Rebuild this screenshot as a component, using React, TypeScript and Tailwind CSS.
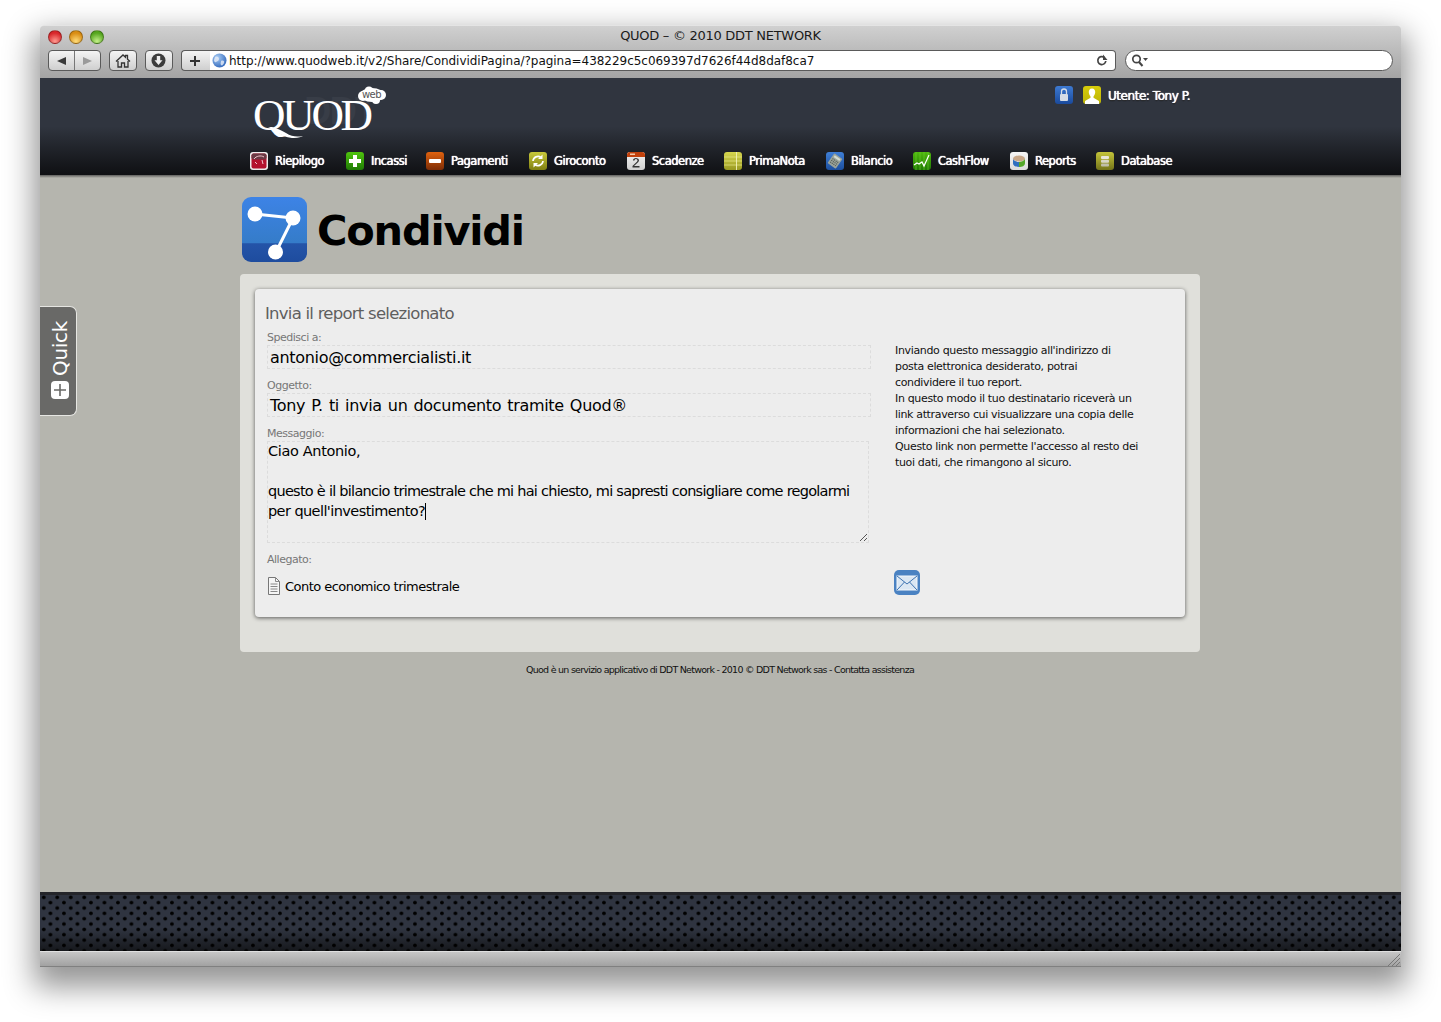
import React from "react";

const lg = "[font-family:'DejaVu_Sans',sans-serif]";

function Box({ id, from, to, children, rx = 3 }: { id: string; from: string; to: string; children?: React.ReactNode; rx?: number }) {
  return (
    <svg width="18" height="18" viewBox="0 0 18 18" className="shrink-0">
      <defs>
        <linearGradient id={id} x1="0" y1="0" x2="0" y2="1">
          <stop offset="0" stopColor={from} />
          <stop offset="1" stopColor={to} />
        </linearGradient>
      </defs>
      <rect width="18" height="18" rx={rx} fill={`url(#${id})`} />
      {children}
    </svg>
  );
}

const navItems: { label: string; w: string; icon: React.ReactNode }[] = [
  {
    label: "Riepilogo",
    w: "w-[51px]",
    icon: (
      <Box id="n1" from="#f2f2f2" to="#e8e8e8">
        <rect x="1.5" y="1.5" width="15" height="15" rx="2" fill="#b3122e" />
        <rect x="1.5" y="1.5" width="15" height="6" rx="2" fill="#6b3a45" />
        <path d="M4 7c2-3 7-4 10-2M5 10l2 2M12 8l1 4" stroke="#f0c8d0" strokeWidth="1" fill="none" />
      </Box>
    ),
  },
  {
    label: "Incassi",
    w: "w-[35px]",
    icon: (
      <Box id="n2" from="#4fc40e" to="#1f7a05">
        <path d="M7 3h4v4h4v4h-4v4H7v-4H3V7h4z" fill="#fff" />
      </Box>
    ),
  },
  {
    label: "Pagamenti",
    w: "w-[58px]",
    icon: (
      <Box id="n3" from="#e0620f" to="#7c2c06">
        <rect x="3" y="7" width="12" height="4" rx="1" fill="#fff" />
      </Box>
    ),
  },
  {
    label: "Giroconto",
    w: "w-[53px]",
    icon: (
      <Box id="n4" from="#c9c93a" to="#7f7f12">
        <path d="M4 9a5 5 0 0 1 8-3.5M14 9a5 5 0 0 1-8 3.5" stroke="#fff" strokeWidth="1.7" fill="none" />
        <path d="M13.5 2.5v4.5H9zM4.500 15.500V11H9z" fill="#fff" />
      </Box>
    ),
  },
  {
    label: "Scadenze",
    w: "w-[52px]",
    icon: (
      <Box id="n5" from="#f4f4f4" to="#cfcfcf">
        <path d="M0 5V3a3 3 0 0 1 3-3h12a3 3 0 0 1 3 3v2z" fill="#c2410c" />
        <rect x="3" y="1.500" width="5" height="1.500" fill="#f3c9a8" />
        <path d="M6 8.500a3 2.300 0 1 1 5.300 1.400L7 14h5.500v1.500H5.500V14l4.400-4.300A1.500 1.500 0 1 0 7.500 8.500z" fill="#333" />
      </Box>
    ),
  },
  {
    label: "PrimaNota",
    w: "w-[57px]",
    icon: (
      <Box id="n6" from="#d6d64e" to="#9a9a22">
        <path d="M0 5h18M0 9h18M0 13h18" stroke="#e8e88a" strokeWidth=".7" />
        <path d="M12.500 0v18" stroke="#f2f2b8" strokeWidth=".9" />
      </Box>
    ),
  },
  {
    label: "Bilancio",
    w: "w-[42px]",
    icon: (
      <Box id="n7" from="#3f7fd6" to="#1c4f9e">
        <g transform="rotate(35 9 9)">
          <rect x="4" y="3" width="10" height="12" rx="1" fill="#9aa39a" />
          <rect x="5.500" y="4.300" width="7" height="2.200" fill="#d3dbd0" />
          <path d="M5.500 8.500h7M5.500 10.500h7M5.500 12.500h7" stroke="#50584f" strokeWidth="1" strokeDasharray="1.200 .8" />
        </g>
      </Box>
    ),
  },
  {
    label: "CashFlow",
    w: "w-[52px]",
    icon: (
      <Box id="n8" from="#4fb80e" to="#1f7a05">
        <path d="M3 0v18M7 0v18M11 0v18M15 0v18" stroke="#6ccf2c" strokeWidth="1" opacity=".6" />
        <path d="M1 13l3-2 2 1 3-2 2 4 5-11" stroke="#fff" strokeWidth="1.200" fill="none" />
      </Box>
    ),
  },
  {
    label: "Reports",
    w: "w-[41px]",
    icon: (
      <Box id="n9" from="#f6f6f6" to="#dcdcdc">
        <ellipse cx="9" cy="6.500" rx="6" ry="3" fill="#c9a889" />
        <path d="M3 7c1 2 4 3 6 3v5c-3 0-6-1-6-4z" fill="#2f6fc0" />
        <path d="M15 7c-1 2-4 3-6 3v5c3 0 6-1 6-4z" fill="#55a82a" />
      </Box>
    ),
  },
  {
    label: "Database",
    w: "w-[50px]",
    icon: (
      <Box id="n10" from="#c4c43a" to="#74741a">
        <rect x="5" y="4" width="8" height="3" rx="1" fill="#e8e6d8" />
        <rect x="5" y="7.800" width="8" height="3" rx="1" fill="#d8d6c6" />
        <rect x="5" y="11.600" width="8" height="3" rx="1" fill="#c0beaa" />
      </Box>
    ),
  },
];

function TrafficLight({ from, to }: { from: string; to: string }) {
  return (
    <span
      className="block w-[14px] h-[14px] rounded-full border border-[#0000004d]"
      style={{ background: `radial-gradient(circle at 50% 85%, ${to}, ${from} 70%)` }}
    />
  );
}

function Toolbtn({ children, className = "" }: { children: React.ReactNode; className?: string }) {
  return (
    <div
      className={`h-[21px] flex items-center justify-center border border-[#5a5a5a] rounded-[4px] bg-gradient-to-b from-[#f4f4f4] to-[#cfcfcf] ${className}`}
    >
      {children}
    </div>
  );
}

function Toolbar() {
  return (
    <div className="h-[53px] shrink-0 bg-gradient-to-b from-[#d0d0d0] to-[#a4a4a4] border-t border-[#e4e4e4] rounded-t-[4px] flex flex-col">
      <div className="h-[21px] relative flex items-center pl-[8px] gap-[7px]">
        <TrafficLight from="#d8262a" to="#ff9a90" />
        <TrafficLight from="#d98c12" to="#ffdc7a" />
        <TrafficLight from="#55a51e" to="#c4f08a" />
        <span className={`absolute inset-x-0 top-0 text-center text-[13px] leading-[20px] text-[#1a1a1a] ${lg} tracking-[-0.280px]`}>
          QUOD – © 2010 DDT NETWORK
        </span>
      </div>
      <div className="flex items-center pl-[8px] pr-[8px] mt-[3px]">
        <Toolbtn className="w-[53px] !justify-start">
          <span className="w-[26px] h-full flex items-center justify-center border-r border-[#777]">
            <svg width="11" height="10" viewBox="0 0 11 10"><path d="M10 1v8L1 5z" fill="#3a3a3a" /></svg>
          </span>
          <span className="w-[26px] h-full flex items-center justify-center">
            <svg width="11" height="10" viewBox="0 0 11 10"><path d="M1 1v8l9-4z" fill="#9a9a9a" /></svg>
          </span>
        </Toolbtn>
        <Toolbtn className="w-[28px] ml-[8px]">
          <svg width="16" height="14" viewBox="0 0 16 14">
            <path d="M1 7.500L8 1l2.500 2.300V1.500h2v3.600L15 7.500M3 7v6h3.500V9h3v4H13V7" stroke="#333" strokeWidth="1.300" fill="none" />
          </svg>
        </Toolbtn>
        <Toolbtn className="w-[28px] ml-[8px]">
          <svg width="15" height="15" viewBox="0 0 15 15">
            <circle cx="7.500" cy="7.500" r="7" fill="#3c3c3c" />
            <path d="M5.800 3h3.400v4.200h2.300L7.500 12 3.500 7.200h2.300z" fill="#eee" />
          </svg>
        </Toolbtn>
        <Toolbtn className="w-[29px] ml-[8px] rounded-r-none border-r-0 !pr-[2px]">
          <svg width="12" height="12" viewBox="0 0 12 12"><path d="M6 1v10M1 6h10" stroke="#333" strokeWidth="2" /></svg>
        </Toolbtn>
        <div className="h-[21px] w-[907px] bg-white border border-[#5a5a5a] border-l-0 rounded-r-[4px] flex items-center pl-[2px] pr-[7px]">
          <svg width="15" height="15" viewBox="0 0 15 15" className="shrink-0">
            <defs>
              <radialGradient id="gl" cx=".35" cy=".3" r=".8">
                <stop offset="0" stopColor="#a9cdf5" />
                <stop offset="1" stopColor="#2a62b8" />
              </radialGradient>
            </defs>
            <circle cx="7.500" cy="7.500" r="7" fill="url(#gl)" />
            <path d="M3 4c2-1 4 0 4 2s-2 2-3 3-2-1-2-2zM9 8c2-1 4 0 3 2s-2 3-3 2 0-3 0-4z" fill="#e8eef7" opacity=".8" />
          </svg>
          <span className={`ml-[2px] pt-[1px] flex-1 text-[12px] leading-none text-[#111] whitespace-nowrap ${lg} tracking-[-0.030px]`}>
            http://www.quodweb.it/v2/Share/CondividiPagina/?pagina=438229c5c069397d7626f44d8daf8ca7
          </span>
          <svg width="12" height="13" viewBox="0 0 12 13">
            <path d="M9.800 7a4 4 0 1 1-1.500-3.600" stroke="#444" strokeWidth="1.700" fill="none" />
            <path d="M7 .5v5.500h4.500z" fill="#444" />
          </svg>
        </div>
        <div className="h-[21px] w-[268px] ml-[9px] bg-white border border-[#5a5a5a] rounded-full flex items-center pl-[5px]">
          <svg width="18" height="13" viewBox="0 0 18 13">
            <circle cx="5.500" cy="5" r="3.700" stroke="#444" strokeWidth="1.700" fill="none" />
            <path d="M8 8l3.500 4" stroke="#444" strokeWidth="2" />
            <path d="M12 4h5l-2.500 3z" fill="#444" />
          </svg>
        </div>
      </div>
    </div>
  );
}

function Logo() {
  return (
    <div className="relative w-[140px] h-[62px]">
      <span className="absolute left-[54px] top-[14px] text-[38px] leading-none font-bold text-[#383d47] [font-family:'Liberation_Sans',sans-serif] tracking-[-2px]">
        DDT
      </span>
      <span className="absolute left-[3px] top-[15px] text-[45px] leading-[44px] text-white [font-family:'Liberation_Serif',serif] tracking-[-3.300px]">
        QUOD
      </span>
      <svg width="60" height="14" viewBox="0 0 60 14" className="absolute left-[16px] top-[48px]">
        <path d="M2 1c7 2 12 10 24 11 6 .4 9-1 11-2-6 1-11 1-17-3C15 4 10 2 6 1z" fill="#fff" />
      </svg>
      <svg width="30" height="19" viewBox="0 0 30 19" className="absolute left-[107px] top-[8px]">
        <ellipse cx="15" cy="9" rx="12" ry="7" fill="#fff" />
        <circle cx="6" cy="10" r="5" fill="#fff" />
        <circle cx="24" cy="9" r="5" fill="#fff" />
        <circle cx="12" cy="5" r="4.500" fill="#fff" />
        <circle cx="19" cy="14" r="4" fill="#fff" />
      </svg>
      <span className={`absolute left-[112px] top-[10px] text-[10px] leading-[14px] text-[#555] ${lg} tracking-[-0.600px]`}>web</span>
    </div>
  );
}

function Header() {
  const shadow = "[text-shadow:0_0_.8px_#fff,0_0_.8px_#fff,0_1px_1px_#000]";
  return (
    <div className="h-[97px] shrink-0 bg-gradient-to-b from-[#30353f] from-50% to-[#0f1013] flex flex-col pl-[210px]">
      <div className="h-[74px] w-[950px] flex justify-between">
        <Logo />
        <div className="flex items-center h-[18px] mt-[8px] pr-[10px]">
          <Box id="u1" from="#3d7ad2" to="#1a4a9c">
            <rect x="5" y="8" width="8" height="7" rx="1" fill="#d5dce6" />
            <path d="M6.500 8V5.500a2.500 2.500 0 0 1 5 0V8" stroke="#d5dce6" strokeWidth="1.300" fill="none" />
          </Box>
          <span className="ml-[10px]">
            <Box id="u2" from="#d6cc0a" to="#bdb406">
              <path d="M9 2.500c2.300 0 3.400 1.800 3.200 4-.2 2-1.200 3.300-1.700 4v1.300L16 15v3H2v-3l5.500-3.200v-1.300C7 9.800 6 8.500 5.800 6.500c-.2-2.200.9-4 3.200-4z" fill="#fff" />
            </Box>
          </span>
          <span className={`ml-[7px] pt-[2px] text-[12px] leading-none text-white whitespace-nowrap ${lg} tracking-[-0.450px] ${shadow}`}>Utente: Tony P.</span>
        </div>
      </div>
      <nav className="flex gap-[20px]">
        {navItems.map((n) => (
          <div key={n.label} className="flex items-center gap-[7px] h-[18px]">
            {n.icon}
            <span className={`${n.w} pt-[1px] text-[11.500px] leading-none text-white whitespace-nowrap ${lg} tracking-[-0.480px] ${shadow}`}>{n.label}</span>
          </div>
        ))}
      </nav>
    </div>
  );
}

function ShareIcon() {
  return (
    <svg width="66" height="66" viewBox="0 0 66 66" className="shrink-0">
      <defs>
        <linearGradient id="sh" x1="0" y1="0" x2="0" y2="1">
          <stop offset="0" stopColor="#3d83e6" />
          <stop offset=".7" stopColor="#357cc9" />
          <stop offset=".72" stopColor="#2454a8" />
          <stop offset="1" stopColor="#1e4c9e" />
        </linearGradient>
      </defs>
      <rect width="65" height="65" rx="9" fill="url(#sh)" />
      <path d="M13 17l38 4-17 34" stroke="#fff" strokeWidth="3" fill="none" />
      <circle cx="13" cy="17" r="7.500" fill="#fff" />
      <circle cx="51" cy="21" r="7.500" fill="#fff" />
      <circle cx="33.500" cy="55" r="7.500" fill="#fff" />
    </svg>
  );
}

const labelCls = `h-[14px] text-[11px] leading-[14px] text-[#777] ${lg} tracking-[-0.480px]`;

function Field({ label, value }: { label: string; value: string }) {
  return (
    <div className="w-[604px] mb-[10px]">
      <div className={labelCls}>{label}</div>
      <div className={`h-[24px] border border-dashed border-[#dcdcdc] pl-[2px] text-[16px] leading-[23px] text-black whitespace-nowrap ${lg} tracking-[-0.320px] [word-spacing:1.300px]`}>
        {value}
      </div>
    </div>
  );
}

function Card() {
  const right = [
    "Inviando questo messaggio all'indirizzo di",
    "posta elettronica desiderato, potrai",
    "condividere il tuo report.",
    "In questo modo il tuo destinatario riceverà un",
    "link attraverso cui visualizzare una copia delle",
    "informazioni che hai selezionato.",
    "Questo link non permette l'accesso al resto dei",
    "tuoi dati, che rimangono al sicuro.",
  ];
  return (
    <div className="w-[960px] h-[378px] mt-[12px] bg-[#e0e0db] rounded-[4px] p-[15px]">
      <div className="h-[328px] bg-[#ededed] rounded-[4px] shadow-[0_1px_4px_rgba(0,0,0,.6)] pt-[13px] pl-[12px] flex">
        <div className="w-[628px] shrink-0">
          <h2 className={`-ml-[2px] h-[29px] pt-[1px] text-[16.500px] leading-[22px] text-[#5f5f5f] font-normal ${lg} tracking-[-0.750px]`}>
            Invia il report selezionato
          </h2>
          <Field label="Spedisci a:" value="antonio@commercialisti.it" />
          <Field label="Oggetto:" value="Tony P. ti invia un documento tramite Quod®" />
          <div className={labelCls}>Messaggio:</div>
          <div className={`relative w-[602px] h-[102px] border border-dashed border-[#dcdcdc] text-[14.500px] leading-[20px] text-black ${lg}`}>
            <div className="-mt-[1px] whitespace-nowrap tracking-[-0.350px]">Ciao Antonio,</div>
            <div className="h-[20px]" />
            <div className="whitespace-nowrap tracking-[-0.740px]">questo è il bilancio trimestrale che mi hai chiesto, mi sapresti consigliare come regolarmi</div>
            <div className="whitespace-nowrap flex items-center tracking-[-0.580px]">
              per quell'investimento?<span className="inline-block w-px h-[17px] bg-black" />
            </div>
            <svg width="9" height="9" viewBox="0 0 9 9" className="absolute right-0 bottom-0">
              <path d="M1 8l7-7M5 8l3-3" stroke="#555" strokeWidth="1" />
            </svg>
          </div>
          <div className={`mt-[10px] ${labelCls}`}>Allegato:</div>
          <div className="flex items-center mt-[10px] h-[18px] pl-[1px]">
            <svg width="12" height="18" viewBox="0 0 12 18" className="shrink-0">
              <path d="M.5.500h7l4 4v13H.5z" fill="#f5f5f5" stroke="#777" />
              <path d="M7.500.500v4h4M2.500 7h7M2.500 9.500h7M2.500 12h7M2.500 14.500h7" stroke="#888" fill="none" />
            </svg>
            <span className={`ml-[5px] text-[13px] leading-none text-black whitespace-nowrap ${lg} tracking-[-0.540px]`}>Conto economico trimestrale</span>
          </div>
        </div>
        <div className="flex flex-col">
          <div className={`mt-[41px] h-[228px] text-[11px] leading-[16px] text-[#111] ${lg} tracking-[-0.340px]`}>
            {right.map((l) => (
              <div key={l} className="whitespace-nowrap">{l}</div>
            ))}
          </div>
          <svg width="26" height="25" viewBox="0 0 26 25" className="-ml-[1px] -mt-[1px]">
            <rect width="26" height="25" rx="5" fill="#4a82c2" />
            <rect x="3" y="6" width="20" height="14" fill="#dbe7f3" stroke="#f3f7fb" />
            <path d="M3 6l10 8 10-8M3 20l7.500-8M23 20l-7.500-8" stroke="#3d73b2" fill="none" />
          </svg>
        </div>
      </div>
    </div>
  );
}

export default function App() {
  return (
    <div className="w-[1441px] h-[1022px] bg-white pt-[25px] pl-[40px] overflow-hidden">
      <div className="relative w-[1361px] h-[942px] flex flex-col rounded-t-[4px] shadow-[0_14px_30px_6px_rgba(0,0,0,.42)]">
        <Toolbar />
        <Header />
        <main className="flex-1 bg-[#b5b5ae] pl-[200px] bg-[linear-gradient(#5f5f5c,#b5b5ae_3px)]">
          <div className="flex items-center h-[65px] mt-[22px] ml-[2px] gap-[9px]">
            <ShareIcon />
            <h1 className={`pt-[2px] text-[41.500px] leading-none font-bold text-black ${lg} tracking-[-1.200px]`}>Condividi</h1>
          </div>
          <Card />
          <p className={`mt-[11px] w-[960px] text-center text-[9.500px] leading-[13px] text-[#111] ${lg} tracking-[-0.740px]`}>
            Quod è un servizio applicativo di DDT Network - 2010 © DDT Network sas - Contatta assistenza
          </p>
        </main>
        <div
          className="h-[59px] shrink-0 border-t-[3px] border-[#24252a] bg-[#2f3440] bg-[radial-gradient(circle,#000_1.4px,transparent_2.2px),radial-gradient(circle,#000_1.4px,transparent_2.2px),linear-gradient(#2f3440_60%,#16181c)] [background-size:13.5px_10.7px,13.5px_10.7px,100%_100%] [background-position:-3px_-3px,3.700px_2.300px,0_0]"
        />
        <div className="h-[16px] shrink-0 relative bg-gradient-to-b from-[#c6c6c6] to-[#a2a2a2] border-t border-[#e0e0e0] border-b border-b-[#808080] flex justify-end items-end">
          <svg width="13" height="13" viewBox="0 0 13 13" className="mr-px">
            <path d="M1 13L13 1M5 13l8-8M9 13l4-4" stroke="#777" strokeWidth="1" />
          </svg>
        </div>
        <aside className="absolute left-0 top-[281px] w-[37px] h-[110px] bg-[#696967] border border-l-0 border-[#e6e6e2] rounded-r-[7px] flex flex-col-reverse items-center pb-[16px] pl-[4px]">
          <svg width="18" height="18" viewBox="0 0 18 18" className="shrink-0">
            <rect width="18" height="18" rx="4" fill="#fff" />
            <path d="M9 3v12M3 9h12" stroke="#696967" strokeWidth="1.600" />
          </svg>
          <span className={`mb-[5px] text-[20px] leading-none text-white [writing-mode:vertical-rl] rotate-180 ${lg} tracking-[-0.300px]`}>Quick</span>
        </aside>
      </div>
    </div>
  );
}
